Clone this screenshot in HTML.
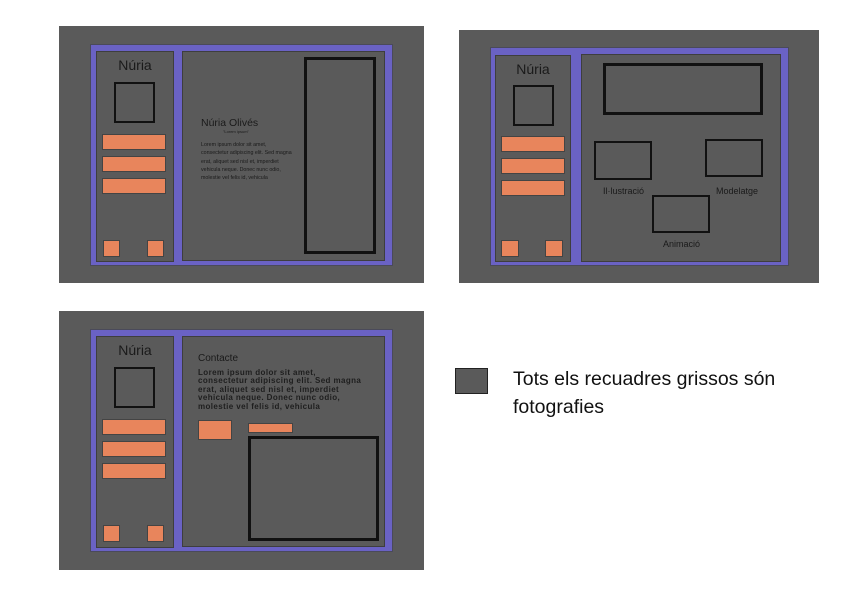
<!DOCTYPE html>
<html><head><meta charset="utf-8"><style>
*{margin:0;padding:0;box-sizing:border-box}
body{width:842px;height:595px;background:#fff;position:relative;overflow:hidden;font-family:"Liberation Sans",Arial,sans-serif;color:#1a1a1a}
div{position:absolute}
.bg{background:#5a5a5a}
.pu{background:#6a62c4;border:1px solid #4a4a5a}
.pn{background:#5a5a5a;border:1px solid #3e3e3e}
.ph{border:2px solid #111}
.ph3{border:3px solid #111}
.or{background:#e8855c;border:1px solid #444}
.t{white-space:nowrap;line-height:1}
</style></head><body>

<!-- Panel 1 -->
<div class="bg" style="left:59px;top:26px;width:365px;height:257px"></div>
<div class="pu" style="left:90px;top:44px;width:303px;height:222px"></div>
<div class="pn" style="left:96px;top:51px;width:78px;height:211px"></div>
<div class="pn" style="left:182px;top:51px;width:203px;height:210px"></div>
<div class="t" style="left:96px;top:58px;width:78px;text-align:center;font-size:14px">Núria</div>
<div class="ph" style="left:114px;top:82px;width:41px;height:41px"></div>
<div class="or" style="left:102px;top:134px;width:64px;height:16px"></div>
<div class="or" style="left:102px;top:156px;width:64px;height:16px"></div>
<div class="or" style="left:102px;top:178px;width:64px;height:16px"></div>
<div class="or" style="left:103px;top:240px;width:17px;height:17px"></div>
<div class="or" style="left:147px;top:240px;width:17px;height:17px"></div>
<div class="ph3" style="left:304px;top:57px;width:72px;height:197px"></div>
<div class="t" style="left:201px;top:118px;font-size:10.5px">Núria Olivés</div>
<div class="t" style="left:223px;top:130px;font-size:4px">"Lorem ipsum"</div>
<div style="left:201px;top:141px;width:110px;font-size:5.3px;line-height:8.3px;white-space:nowrap">Lorem ipsum dolor sit amet,<br>consectetur adipiscing elit. Sed magna<br>erat, aliquet sed nisl et, imperdiet<br>vehicula neque. Donec nunc odio,<br>molestie vel felis id, vehicula</div>

<!-- Panel 2 -->
<div class="bg" style="left:459px;top:30px;width:360px;height:253px"></div>
<div class="pu" style="left:490px;top:47px;width:299px;height:219px"></div>
<div class="pn" style="left:495px;top:55px;width:76px;height:207px"></div>
<div class="pn" style="left:581px;top:54px;width:200px;height:208px"></div>
<div class="t" style="left:495px;top:62px;width:76px;text-align:center;font-size:14px">Núria</div>
<div class="ph" style="left:513px;top:85px;width:41px;height:41px"></div>
<div class="or" style="left:501px;top:136px;width:64px;height:16px"></div>
<div class="or" style="left:501px;top:158px;width:64px;height:16px"></div>
<div class="or" style="left:501px;top:180px;width:64px;height:16px"></div>
<div class="or" style="left:501px;top:240px;width:18px;height:17px"></div>
<div class="or" style="left:545px;top:240px;width:18px;height:17px"></div>
<div class="ph3" style="left:603px;top:63px;width:160px;height:52px"></div>
<div class="ph" style="left:594px;top:141px;width:58px;height:39px"></div>
<div class="ph" style="left:705px;top:139px;width:58px;height:38px"></div>
<div class="ph" style="left:652px;top:195px;width:58px;height:38px"></div>
<div class="t" style="left:603px;top:187px;font-size:9px">Il·lustració</div>
<div class="t" style="left:716px;top:187px;font-size:9px">Modelatge</div>
<div class="t" style="left:663px;top:240px;font-size:9px">Animació</div>

<!-- Panel 3 -->
<div class="bg" style="left:59px;top:311px;width:365px;height:259px"></div>
<div class="pu" style="left:90px;top:329px;width:303px;height:223px"></div>
<div class="pn" style="left:96px;top:336px;width:78px;height:212px"></div>
<div class="pn" style="left:182px;top:336px;width:203px;height:211px"></div>
<div class="t" style="left:96px;top:343px;width:78px;text-align:center;font-size:14px">Núria</div>
<div class="ph" style="left:114px;top:367px;width:41px;height:41px"></div>
<div class="or" style="left:102px;top:419px;width:64px;height:16px"></div>
<div class="or" style="left:102px;top:441px;width:64px;height:16px"></div>
<div class="or" style="left:102px;top:463px;width:64px;height:16px"></div>
<div class="or" style="left:103px;top:525px;width:17px;height:17px"></div>
<div class="or" style="left:147px;top:525px;width:17px;height:17px"></div>
<div class="t" style="left:198px;top:354px;font-size:10px">Contacte</div>
<div style="left:198px;top:369px;width:190px;font-size:8px;font-weight:bold;letter-spacing:0.4px;line-height:8.4px;color:#1e1e1e;white-space:nowrap">Lorem ipsum dolor sit amet,<br>consectetur adipiscing elit. Sed magna<br>erat, aliquet sed nisl et, imperdiet<br>vehicula neque. Donec nunc odio,<br>molestie vel felis id, vehicula</div>
<div class="or" style="left:198px;top:420px;width:34px;height:20px"></div>
<div class="or" style="left:248px;top:423px;width:45px;height:10px"></div>
<div class="ph3" style="left:248px;top:436px;width:131px;height:105px"></div>

<!-- Legend -->
<div style="left:455px;top:368px;width:33px;height:26px;background:#5a5a5a;border:1px solid #222"></div>
<div style="left:513px;top:365px;font-size:19.5px;line-height:28px;color:#111;white-space:nowrap">Tots els recuadres grissos són<br>fotografies</div>
</body></html>
